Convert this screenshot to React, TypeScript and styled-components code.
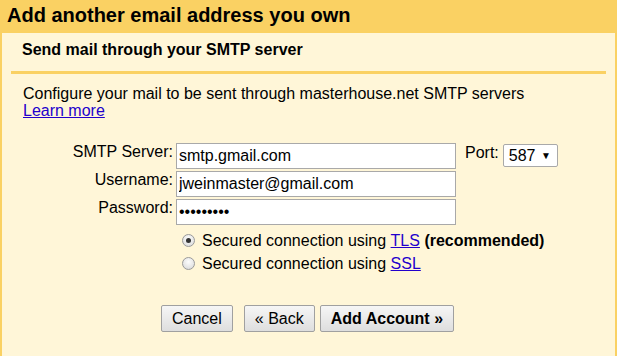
import styled, { createGlobalStyle } from 'styled-components';

const GlobalStyle = createGlobalStyle`
    html, body {
        margin: 0;
        padding: 0;
        background: #fff6d8;
    }
    body {
        font-family: 'Liberation Sans', Arial, sans-serif;
        color: #000;
    }
`;

const YELLOW = '#fad163';

const Dialog = styled.div`
    width: 617px;
    height: 356px;
    display: flex;
    flex-direction: column;
    overflow: hidden;
`;

const Header = styled.div`
    height: 33px;
    flex: none;
    box-sizing: border-box;
    padding-left: 7px;
    background: ${YELLOW};
    font-size: 20px;
    font-weight: bold;
    line-height: 31px;
`;

const Body = styled.div`
    flex: 1;
    background: #fff6d8;
    border-left: 2px solid ${YELLOW};
    border-right: 2px solid ${YELLOW};
    padding-top: 8px;
`;

const SubHeading = styled.div`
    margin-left: 20px;
    font-size: 16px;
    font-weight: bold;
    line-height: 18px;
`;

const Rule = styled.div`
    height: 3px;
    margin: 12px 9px 0 9px;
    background: ${YELLOW};
`;

const Intro = styled.p`
    margin: 11px 0 0 21px;
    font-size: 16px;
    line-height: 17px;
`;

const Link = styled.a`
    color: #2200cc;
    text-decoration: underline;
    cursor: pointer;
`;

const FormGrid = styled.div`
    display: grid;
    grid-template-columns: 171px 280px auto;
    column-gap: 3px;
    row-gap: 2px;
    margin-top: 24px;
`;

const Label = styled.label`
    font-size: 16px;
    line-height: 18px;
    text-align: right;
    white-space: nowrap;
`;

const TextInput = styled.input`
    box-sizing: border-box;
    width: 280px;
    height: 26px;
    margin: 0;
    padding: 0 2px;
    border: 1px solid #a9a9a9;
    background: #fff;
    font-family: 'Liberation Sans', Arial, sans-serif;
    font-size: 16px;
    color: #000;
    outline: none;
`;

const PortCell = styled.div`
    display: flex;
    align-items: flex-start;
    gap: 4px;
    margin-left: 6px;
    margin-top: 1px;
    font-size: 16px;
    line-height: 18px;
`;

const SelectBox = styled.div`
    box-sizing: border-box;
    height: 23px;
    width: 55px;
    display: flex;
    align-items: center;
    justify-content: space-between;
    padding: 0 6px 0 5px;
    border: 1px solid #a9a9a9;
    border-radius: 2px;
    background: #fff;
    font-size: 16px;
`;

const Arrow = styled.span`
    font-size: 10px;
`;

const RadioGroup = styled.div`
    grid-column: 2 / span 2;
    display: flex;
    flex-direction: column;
    margin-top: 2px;
    padding-left: 6px;
`;

const RadioRow = styled.label`
    display: flex;
    align-items: center;
    height: 23px;
    font-size: 16px;
    white-space: nowrap;
`;

const Radio = styled.span<{ $checked?: boolean }>`
    box-sizing: border-box;
    width: 13px;
    height: 13px;
    margin-right: 7px;
    border-radius: 50%;
    border: 1px solid #9a9a9a;
    background: radial-gradient(circle at 50% 35%, #fdfdfd 0%, #e6e6e6 60%, #d4d4d4 100%);
    display: flex;
    align-items: center;
    justify-content: center;

    &::after {
        content: '';
        width: 5px;
        height: 5px;
        border-radius: 50%;
        background: ${({ $checked }) => ($checked ? '#333' : 'transparent')};
    }
`;

const ButtonRow = styled.div`
    display: flex;
    margin: 30px 0 0 159px;
`;

const Button = styled.button<{ $primary?: boolean; $gap?: number }>`
    box-sizing: border-box;
    height: 27px;
    margin: 0 0 0 ${({ $gap }) => $gap ?? 0}px;
    padding: 0 10px;
    border: 1px solid #a0a0a0;
    border-radius: 2px;
    background: linear-gradient(#f6f6f6, #dedede);
    font-family: 'Liberation Sans', Arial, sans-serif;
    font-size: 16px;
    font-weight: ${({ $primary }) => ($primary ? 'bold' : 'normal')};
    color: #000;
    cursor: pointer;
`;

const App = () => {
    return (
        <Dialog>
            <GlobalStyle />
            <Header>Add another email address you own</Header>
            <Body>
                <SubHeading>Send mail through your SMTP server</SubHeading>
                <Rule />
                <Intro>
                    Configure your mail to be sent through masterhouse.net SMTP servers
                    <br />
                    <Link>Learn more</Link>
                </Intro>
                <FormGrid>
                    <Label>SMTP Server:</Label>
                    <TextInput defaultValue="smtp.gmail.com" />
                    <PortCell>
                        Port:
                        <SelectBox>
                            587 <Arrow>▼</Arrow>
                        </SelectBox>
                    </PortCell>
                    <Label>Username:</Label>
                    <TextInput defaultValue="jweinmaster@gmail.com" />
                    <div />
                    <Label>Password:</Label>
                    <TextInput type="password" defaultValue="secretpwd" />
                    <div />
                    <div />
                    <RadioGroup>
                        <RadioRow>
                            <Radio $checked />
                            Secured connection using&nbsp;<Link>TLS</Link>&nbsp;<b>(recommended)</b>
                        </RadioRow>
                        <RadioRow>
                            <Radio />
                            Secured connection using&nbsp;<Link>SSL</Link>
                        </RadioRow>
                    </RadioGroup>
                </FormGrid>
                <ButtonRow>
                    <Button>Cancel</Button>
                    <Button $gap={11}>« Back</Button>
                    <Button $primary $gap={5}>Add Account »</Button>
                </ButtonRow>
            </Body>
        </Dialog>
    );
};

export default App;
